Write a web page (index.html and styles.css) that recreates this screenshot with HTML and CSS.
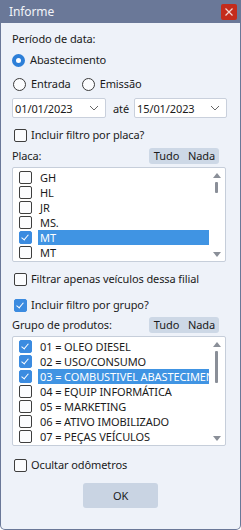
FILE: index.html
```html
<!DOCTYPE html>
<html>
<head>
<meta charset="utf-8">
<link rel="stylesheet" href="styles.css">
</head>
<body>
<div class="window">
  <div class="titlebar">
    <span class="title">Informe</span>
    <span class="close"><svg width="16" height="16" viewBox="0 0 16 16"><path d="M4.5 4.5 L11.5 11.5 M11.5 4.5 L4.5 11.5" stroke="#f4d6d3" stroke-width="1.2"/></svg></span>
  </div>
  <div class="client">
    <div class="label l-periodo">Período de data:</div>
    <div class="opt r-abast"><span class="radio on"></span>Abastecimento</div>
    <div class="row r-ent">
      <div class="opt"><span class="radio"></span>Entrada</div>
      <div class="opt"><span class="radio"></span>Emissão</div>
    </div>
    <div class="row dates">
      <div class="combo c1"><span>01/01/2023</span><svg width="10" height="6" viewBox="0 0 10 6"><path d="M1 1 L5 5 L9 1" fill="none" stroke="#666" stroke-width="1"/></svg></div>
      <span class="ate">até</span>
      <div class="combo c2"><span>15/01/2023</span><svg width="10" height="6" viewBox="0 0 10 6"><path d="M1 1 L5 5 L9 1" fill="none" stroke="#666" stroke-width="1"/></svg></div>
    </div>
    <div class="opt chk-placa"><span class="check"></span>Incluir filtro por placa?</div>
    <div class="hdr h-placa">
      <span>Placa:</span>
      <div class="btns"><span class="sbtn">Tudo</span><span class="sbtn">Nada</span></div>
    </div>
    <div class="listbox lb-placa">
      <div class="items">
        <div class="item"><span class="check"></span><span class="txt">GH</span></div>
        <div class="item"><span class="check"></span><span class="txt">HL</span></div>
        <div class="item"><span class="check"></span><span class="txt">JR</span></div>
        <div class="item"><span class="check"></span><span class="txt">MS.</span></div>
        <div class="item sel"><span class="check on"></span><span class="txt">MT</span></div>
        <div class="item"><span class="check"></span><span class="txt">MT</span></div>
      </div>
      <div class="sbar">
        <span class="up"></span>
        <span class="thumb t-placa"></span>
        <span class="down"></span>
      </div>
    </div>
    <div class="opt chk-filial"><span class="check"></span>Filtrar apenas veículos dessa filial</div>
    <div class="opt chk-grupo"><span class="check on"></span>Incluir filtro por grupo?</div>
    <div class="hdr h-grupo">
      <span>Grupo de produtos:</span>
      <div class="btns"><span class="sbtn">Tudo</span><span class="sbtn">Nada</span></div>
    </div>
    <div class="listbox lb-grupo">
      <div class="items">
        <div class="item"><span class="check on"></span><span class="txt">01 = OLEO DIESEL</span></div>
        <div class="item"><span class="check on"></span><span class="txt">02 = USO/CONSUMO</span></div>
        <div class="item sel"><span class="check on"></span><span class="txt">03 = COMBUSTIVEL ABASTECIMENTO</span></div>
        <div class="item"><span class="check"></span><span class="txt">04 = EQUIP INFORMÁTICA</span></div>
        <div class="item"><span class="check"></span><span class="txt">05 = MARKETING</span></div>
        <div class="item"><span class="check"></span><span class="txt">06 = ATIVO IMOBILIZADO</span></div>
        <div class="item"><span class="check"></span><span class="txt">07 = PEÇAS VEÍCULOS</span></div>
      </div>
      <div class="sbar">
        <span class="up"></span>
        <span class="thumb t-grupo"></span>
        <span class="down"></span>
      </div>
    </div>
    <div class="opt chk-odo"><span class="check"></span>Ocultar odômetros</div>
    <div class="okrow"><span class="okbtn">OK</span></div>
  </div>
</div>
</body>
</html>
```
FILE: styles.css
```css
* { box-sizing: border-box; }
html, body { margin: 0; padding: 0; }
body {
  width: 241px;
  height: 530px;
  background: #ffffff;
  font-family: "Noto Sans", "DejaVu Sans", sans-serif;
  font-size: 11px;
  letter-spacing: -0.1px;
  color: #1b1b1b;
  overflow: hidden;
}
.window {
  width: 241px;
  height: 530px;
  background: #6a7898;
  border-radius: 0 0 5px 5px;
  padding: 0 1px 1px 1px;
  display: flex;
  flex-direction: column;
}
.titlebar {
  height: 23px;
  display: flex;
  align-items: center;
  justify-content: space-between;
  padding: 0 3px 0 8px;
  flex-shrink: 0;
}
.title {
  color: #f2f4f8;
  font-size: 12px;
  line-height: 23px;
}
.close {
  width: 16px;
  height: 16px;
  background: #c42b1c;
  border-radius: 2px;
  display: flex;
}
.client {
  flex: 1;
  background: #eef2f9;
  border-radius: 0 0 4px 4px;
  padding: 0 0 0 11px;
  display: flex;
  flex-direction: column;
}
.label { line-height: 16px; }
.l-periodo { margin-top: 8px; }
.opt {
  display: flex;
  align-items: center;
  line-height: 16px;
  white-space: nowrap;
}
.radio {
  width: 13px;
  height: 13px;
  border-radius: 50%;
  border: 1px solid #3a3a3a;
  background: #fbfcfe;
  margin-right: 5px;
  flex-shrink: 0;
}
.radio.on {
  border: 4px solid #2d7fd8;
  background: #ffffff;
}
.r-abast { margin-top: 5px; }
.row { display: flex; align-items: center; }
.r-ent { margin-top: 8px; gap: 11px; margin-left: 1px; }
.dates { margin-top: 6px; }
.combo {
  height: 20px;
  background: #ffffff;
  border: 1px solid #c9d0dc;
  border-radius: 2px;
  display: flex;
  align-items: center;
  justify-content: space-between;
  padding: 0 6px 0 2px;
}
.c1 { width: 94px; }
.c2 { width: 93px; }
.ate { margin: 0 5px 0 7px; }
.check {
  width: 13px;
  height: 13px;
  border: 1px solid #3e3e3e;
  border-radius: 2px;
  background: #fbfcfe;
  margin-right: 4px;
  flex-shrink: 0;
  position: relative;
}
.check.on {
  border-color: #3b8be0;
  background: #3b8be0;
}
.check.on::after {
  content: "";
  position: absolute;
  left: 3px;
  top: 1px;
  width: 3px;
  height: 6px;
  border: solid #ffffff;
  border-width: 0 1px 1px 0;
  transform: rotate(40deg);
}
.opt .check { margin-left: 2px; }
.chk-placa { margin-top: 9px; }
.hdr {
  display: flex;
  align-items: center;
  justify-content: space-between;
  width: 207px;
  margin-top: 5px;
  line-height: 16px;
}
.btns { display: flex; }
.sbtn {
  background: #cdd8e6;
  height: 16px;
  width: 35px;
  text-align: center;
  line-height: 16px;
}
.sbtn:first-child { border-radius: 3px 0 0 3px; }
.sbtn:last-child { border-radius: 0 3px 3px 0; }
.listbox {
  width: 214px;
  background: #ffffff;
  border: 1px solid #c6ceda;
  border-radius: 2px;
  margin-top: 3px;
  display: flex;
  padding: 1px 1px 1px 5px;
  overflow: hidden;
}
.items { flex: 1; min-width: 0; padding-top: 1px; }
.item {
  height: 15px;
  display: flex;
  align-items: center;
  white-space: nowrap;
  overflow: hidden;
}
.item .check { margin-left: 1px; margin-right: 6px; }
.item .txt {
  padding-left: 2px;
  line-height: 15px;
  height: 15px;
  flex: 1;
  overflow: hidden;
}
.item.sel .txt { background: #4094e3; color: #ffffff; }
.sbar {
  width: 15px;
  display: flex;
  flex-direction: column;
  align-items: center;
  padding: 4px 0 3px;
}
.up, .down {
  width: 0;
  height: 0;
  border-left: 4px solid transparent;
  border-right: 4px solid transparent;
}
.up { border-bottom: 5px solid #8a8f98; }
.down { border-top: 5px solid #8a8f98; margin-top: auto; }
.thumb {
  width: 3px;
  background: #8a8f98;
  border-radius: 1px;
  margin-top: 4px;
}
.t-placa { height: 11px; }
.t-grupo { height: 32px; }
.chk-filial { margin-top: 9px; }
.chk-grupo { margin-top: 10px; }
.h-grupo { margin-top: 4px; }
.lb-grupo { margin-top: 3px; }
.chk-odo { margin-top: 11px; }
.okrow {
  display: flex;
  justify-content: center;
  margin-top: 10px;
  padding-right: 11px;
}
.okbtn {
  width: 75px;
  height: 25px;
  background: #c9d4e3;
  border-radius: 3px;
  text-align: center;
  line-height: 25px;
}
```
